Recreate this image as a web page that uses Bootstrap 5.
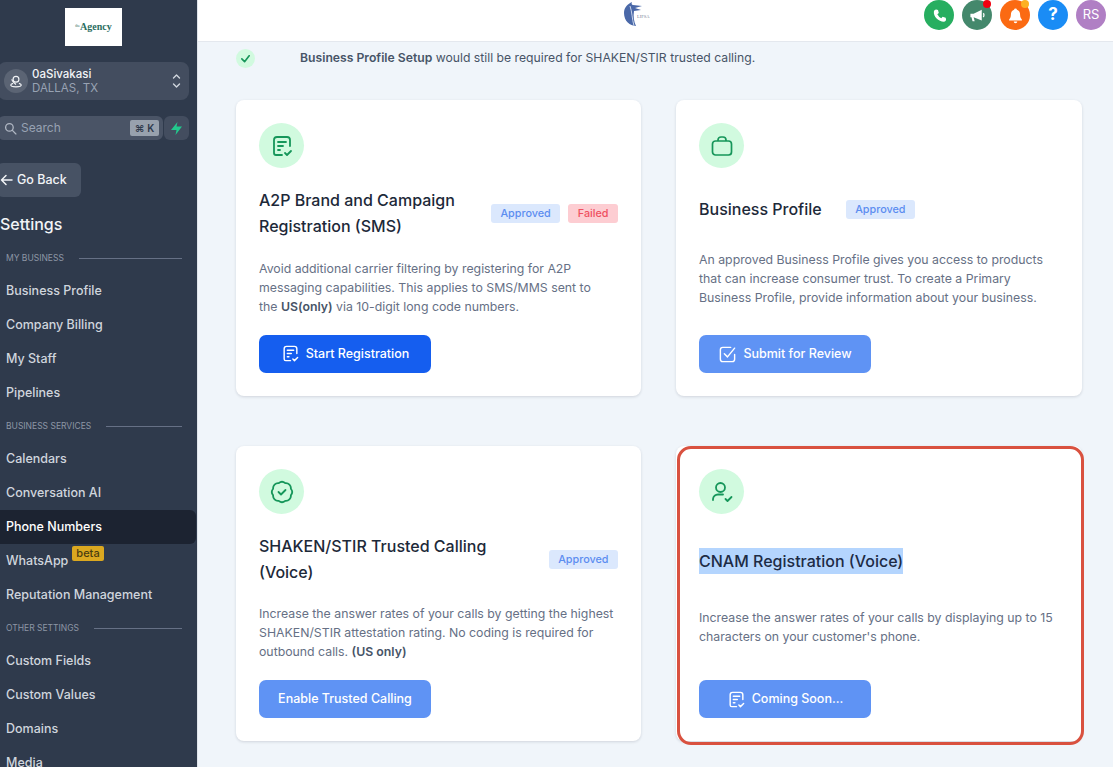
<!DOCTYPE html>
<html lang="en">
<head>
    <meta charset="UTF-8">
    <meta name="viewport" content="width=device-width, initial-scale=1.0">
    <title>Phone Numbers - Settings</title>
    <link href="https://cdn.jsdelivr.net/npm/bootstrap@5.3.0/dist/css/bootstrap.min.css" rel="stylesheet">
    <style>
        html, body { height: 100%; }
        body {
            background: #f0f5fa;
            font-family: Inter, "Noto Sans", sans-serif;
            overflow: hidden;
        }
        .app-shell { height: 767px; }
        .side-bar {
            width: 198px;
            background: #2f3a4c;
            border-right: 1px solid #dfe4ea;
            overflow: hidden;
            color: #d0d5dd;
        }
        .agency-logo {
            width: 57px;
            height: 38px;
            margin: 8px 0 16px 65px;
            font: bold 10px/1 "Liberation Serif", serif;
            color: #2a6e5f;
        }
        .agency-logo sup { font-size: 4px; top: -3px; font-weight: 400; }
        .loc-box {
            width: 191px;
            height: 38px;
            margin-left: -2px;
            padding: 0 8px 0 6px;
            background: #434d5f;
            border-radius: 8px;
        }
        .loc-pin {
            width: 24px;
            height: 24px;
            background: #5b6474;
        }
        .loc-name { font-size: 11.5px; line-height: 14px; color: #f2f4f7; font-weight: 500; }
        .loc-city { font-size: 11.5px; line-height: 14px; color: #98a2b3; }
        .search-row { margin: 16px 0 0 -2px; width: 191px; height: 24px; gap: 1px; }
        .search-box {
            background: #4a5466;
            border-radius: 6px;
            padding: 0 4px 0 6px;
            font-size: 12px;
            color: #98a2b3;
        }
        .kbd-chip {
            width: 29px;
            height: 16px;
            background: #98a1ad;
            color: #2f3a4c;
            border-radius: 2px;
            font-size: 10px;
            font-weight: 600;
        }
        .spark-box { width: 25px; background: #434d5f; border-radius: 6px; }
        .back-btn {
            width: 84px;
            height: 34px;
            margin: 23px 0 0 -3px;
            padding: 0 0 0 3px;
            background: #475264;
            border: 0;
            border-radius: 6px;
            color: #f2f4f7;
            font-size: 12.5px;
            font-weight: 500;
        }
        .side-title {
            margin: 17px 0 8px;
            font-size: 16px;
            line-height: 20px;
            font-weight: 500;
            color: #f2f4f7;
        }
        .side-label {
            height: 32px;
            padding: 0 15px 0 6px;
            gap: 15px;
            font-size: 8.5px;
            color: #8d96a5;
            white-space: nowrap;
        }
        .side-label::after { content: ""; flex: 1; height: 1px; background: #667085; }
        .side-link {
            height: 34px;
            padding-left: 6px;
            font-size: 12.5px;
            font-weight: 500;
            color: #d0d5dd;
            text-decoration: none;
        }
        .side-link.picked {
            background: #1c2331;
            color: #fff;
            margin-right: 1px;
            border-radius: 0 6px 6px 0;
        }
        .beta-tag {
            left: 72px;
            top: 2px;
            width: 32px;
            height: 15px;
            background: #dba820;
            color: #4a3d10;
            border-radius: 2px;
            font-size: 11px;
            line-height: 15px;
            text-align: center;
        }
        .top-bar {
            height: 42px;
            background: #fff;
            border-bottom: 1px solid #e4e8ee;
            padding-right: 7px;
        }
        .brand-mark { margin-left: 424px; width: 32px; height: 28px; align-self: flex-start; }
        .round-btn {
            width: 30px;
            height: 30px;
            color: #fff;
            font-size: 14px;
            font-weight: 500;
        }
        .dot-mark { width: 8px; height: 8px; right: 1px; top: 0; }
        .page-body { padding: 7px 31px 0 38px; }
        .notice-row { height: 19px; font-size: 12.2px; color: #475467; margin-bottom: 32px; }
        .notice-check { width: 19px; height: 19px; background: #d1fadf; margin-right: 45px; }
        .notice-row b { font-weight: 600; }
        .cards-grid {
            display: grid;
            grid-template-columns: 405px 406px;
            grid-template-rows: 296px 295px;
            column-gap: 35px;
            row-gap: 50px;
        }
        .reg-card {
            border: 0;
            border-radius: 8px;
            box-shadow: 0 1px 3px rgba(16, 24, 40, .14);
            padding: 23px 23px 23px;
        }
        .reg-card.flagged::after {
            content: "";
            position: absolute;
            inset: 0 -2px -4px 1px;
            border: 3px solid #d9513f;
            border-radius: 14px;
            pointer-events: none;
        }
        .icon-disc { width: 45px; height: 45px; background: #d1fadf; color: #16965a; }
        .reg-title { font-size: 16px; line-height: 26px; font-weight: 500; color: #1d2939; margin: 0; }
        .reg-title .picked-text { display: inline-block; background: #b4d5fe; color: #1d2b45; }
        .reg-tag {
            height: 19px;
            padding: 0 9.5px;
            font-size: 10.8px;
            line-height: 19px;
            font-weight: 500;
            border-radius: 3px;
        }
        .tag-ok { background: #dbe8fd; color: #5b8df0; }
        .tag-bad { background: #fdcdd2; color: #ef5060; }
        .reg-text { font-size: 12.3px; line-height: 19px; color: #667085; margin: 0; }
        .reg-text b { font-weight: 600; color: #475467; }
        .reg-btn {
            width: 172px;
            height: 38px;
            padding: 0;
            gap: 6px;
            border: 0;
            border-radius: 7px;
            font-size: 12.5px;
            font-weight: 500;
            color: #fff;
            background: #155eef;
        }
        .reg-btn:hover { color: #fff; background: #155eef; }
        .reg-btn.soft, .reg-btn.soft:hover { background: #5f93f4; }
    </style>
</head>
<body>
    <svg class="d-none">
        <symbol id="ico-receipt" viewBox="0 0 24 24" fill="none" stroke="currentColor" stroke-width="1.8" stroke-linecap="round" stroke-linejoin="round">
            <path d="M20 12V6a3 3 0 0 0-3-3H7a3 3 0 0 0-3 3v13a2 2 0 0 0 2 2h6"/>
            <path d="M8 8h8M8 12h5M8 16h2M15 19l2 2 4-4"/>
        </symbol>
        <symbol id="ico-square" viewBox="0 0 24 24" fill="none" stroke="currentColor" stroke-width="1.8" stroke-linecap="round" stroke-linejoin="round">
            <path d="M21 12v6a3 3 0 0 1-3 3H6a3 3 0 0 1-3-3V6a3 3 0 0 1 3-3h10"/>
            <path d="M8 11l4 4 9-11"/>
        </symbol>
    </svg>

    <div class="app-shell d-flex">
        <!-- Sidebar -->
        <aside class="side-bar flex-shrink-0">
            <div class="agency-logo bg-white d-flex align-items-center justify-content-center"><span><sup>the</sup>Agency</span></div>

            <div class="loc-box d-flex align-items-center">
                <span class="loc-pin rounded-circle d-flex align-items-center justify-content-center flex-shrink-0">
                    <svg width="14" height="14" viewBox="0 0 24 24" fill="none" stroke="#f2f4f7" stroke-width="2"><circle cx="12" cy="9" r="5"/><path d="M12 18c-6-5-7-7-7-9M7 16c-3 1-4 2-4 3 0 2 4 3 9 3s9-1 9-3c0-1-1-2-4-3"/></svg>
                </span>
                <div class="flex-grow-1 ms-1">
                    <div class="loc-name">0aSivakasi</div>
                    <div class="loc-city">DALLAS, TX</div>
                </div>
                <svg width="9" height="16" viewBox="0 0 9 16" fill="none" stroke="#d0d5dd" stroke-width="1.4" stroke-linecap="round" stroke-linejoin="round"><path d="M1.5 5L4.5 2l3 3M1.5 11l3 3 3-3"/></svg>
            </div>

            <div class="search-row d-flex">
                <div class="search-box flex-grow-1 d-flex align-items-center gap-1">
                    <svg width="13" height="13" viewBox="0 0 24 24" fill="none" stroke="#b0b7c3" stroke-width="2.4" stroke-linecap="round"><circle cx="10" cy="10" r="7"/><path d="M15.5 15.5L22 22"/></svg>
                    <span class="flex-grow-1">Search</span>
                    <span class="kbd-chip d-flex align-items-center justify-content-center">⌘ K</span>
                </div>
                <div class="spark-box d-flex align-items-center justify-content-center">
                    <svg width="11" height="13" viewBox="0 0 11 13" fill="#22c98d"><path d="M6.5 0L5.5 4.5H11L4.5 13 5.5 8H0z"/></svg>
                </div>
            </div>

            <button class="back-btn btn d-flex align-items-center gap-1">
                <svg width="13" height="12" viewBox="0 0 13 12" fill="none" stroke="#f2f4f7" stroke-width="1.5" stroke-linecap="round" stroke-linejoin="round"><path d="M12 6H1.5M6 1.5L1.5 6 6 10.5"/></svg>
                <span>Go Back</span>
            </button>

            <div class="side-title">Settings</div>

            <div class="side-label d-flex align-items-center">MY BUSINESS</div>
            <a class="side-link d-flex align-items-center" href="#">Business Profile</a>
            <a class="side-link d-flex align-items-center" href="#">Company Billing</a>
            <a class="side-link d-flex align-items-center" href="#">My Staff</a>
            <a class="side-link d-flex align-items-center" href="#">Pipelines</a>

            <div class="side-label d-flex align-items-center">BUSINESS SERVICES</div>
            <a class="side-link d-flex align-items-center" href="#">Calendars</a>
            <a class="side-link d-flex align-items-center" href="#">Conversation AI</a>
            <a class="side-link picked d-flex align-items-center" href="#">Phone Numbers</a>
            <a class="side-link d-flex align-items-center position-relative" href="#">WhatsApp<span class="beta-tag position-absolute">beta</span></a>
            <a class="side-link d-flex align-items-center" href="#">Reputation Management</a>

            <div class="side-label d-flex align-items-center">OTHER SETTINGS</div>
            <a class="side-link d-flex align-items-center" href="#">Custom Fields</a>
            <a class="side-link d-flex align-items-center" href="#">Custom Values</a>
            <a class="side-link d-flex align-items-center" href="#">Domains</a>
            <a class="side-link d-flex align-items-center" href="#">Media</a>
        </aside>

        <div class="flex-grow-1 d-flex flex-column">
            <!-- Top bar -->
            <header class="top-bar d-flex align-items-start flex-shrink-0">
                <svg class="brand-mark" viewBox="0 0 32 28">
                    <path d="M2 13C2 7 6 4 10 2c-1 2 0 3 1 3l9 1-7 2 6 2-7 1c-1 5 0 11 2 15-6 0-12-5-12-13z" fill="#4a68a8"/>
                    <path d="M8 6c2 5 2 13 4 20" stroke="#c9d5ea" stroke-width="1" fill="none"/>
                    <text x="15" y="18" font-size="4.5" fill="#7a8398" font-family="Liberation Serif, serif">LIFSA</text>
                </svg>
                <div class="ms-auto d-flex gap-2">
                    <span class="round-btn rounded-circle d-flex align-items-center justify-content-center" style="background:#27ae60">
                        <svg width="15" height="15" viewBox="0 0 24 24" fill="#fff"><path d="M6.6 2.5l3 .6 1.3 5-2.4 2a14 14 0 0 0 6.4 6.4l2-2.4 5 1.3.6 3c.1 1.500-1.500 3.600-3.500 3.600C10.500 22 2 13.500 3 6c0-2 2.100-3.600 3.600-3.500z"/></svg>
                    </span>
                    <span class="round-btn rounded-circle position-relative d-flex align-items-center justify-content-center" style="background:#44886c">
                        <svg width="17" height="17" viewBox="0 0 24 24" fill="#fff"><path d="M2 9.500h4.500L18 4v15l-11.500-4.500L8 20H5l-1.500-5.500H2z"/><path d="M20 9c1.500.8 1.500 4 0 5" stroke="#fff" stroke-width="1.800" fill="none"/></svg>
                        <span class="dot-mark position-absolute rounded-circle" style="background:#f0000f"></span>
                    </span>
                    <span class="round-btn rounded-circle position-relative d-flex align-items-center justify-content-center" style="background:#fb6a12">
                        <svg width="17" height="17" viewBox="0 0 24 24" fill="#fff"><path d="M12 2a2 2 0 0 1 2 2c3 1 4.500 3.500 4.500 7 0 3 1 5 2.500 6.500V19H3v-1.500C4.500 16 5.500 14 5.500 11c0-3.500 1.500-6 4.500-7a2 2 0 0 1 2-2zM9.500 20.500h5a2.500 2.500 0 0 1-5 0z"/></svg>
                        <span class="dot-mark position-absolute rounded-circle" style="background:#fdb022"></span>
                    </span>
                    <span class="round-btn rounded-circle d-flex align-items-center justify-content-center fw-bold" style="background:#1a8cf5;font-size:17px">?</span>
                    <span class="round-btn rounded-circle d-flex align-items-center justify-content-center" style="background:#b07fc4;font-weight:400;font-size:13px">RS</span>
                </div>
            </header>

            <main class="page-body flex-grow-1">
                <div class="notice-row d-flex align-items-center">
                    <span class="notice-check rounded-circle d-flex align-items-center justify-content-center">
                        <svg width="11" height="11" viewBox="0 0 12 12" fill="none" stroke="#16965a" stroke-width="1.800" stroke-linecap="round" stroke-linejoin="round"><path d="M2 6.500L5 9.500 10 3"/></svg>
                    </span>
                    <span><b>Business Profile Setup</b> would still be required for SHAKEN/STIR trusted calling.</span>
                </div>

                <div class="cards-grid">
                    <!-- A2P -->
                    <section class="reg-card card d-flex flex-column justify-content-between">
                        <span class="icon-disc rounded-circle d-flex align-items-center justify-content-center">
                            <svg width="24" height="24"><use href="#ico-receipt"/></svg>
                        </span>
                        <div class="d-flex align-items-center justify-content-between">
                            <h2 class="reg-title">A2P Brand and Campaign<br>Registration (SMS)</h2>
                            <div class="d-flex gap-2">
                                <span class="reg-tag tag-ok badge">Approved</span>
                                <span class="reg-tag tag-bad badge">Failed</span>
                            </div>
                        </div>
                        <p class="reg-text">Avoid additional carrier filtering by registering for A2P<br>messaging capabilities. This applies to SMS/MMS sent to<br>the <b>US(only)</b> via 10-digit long code numbers.</p>
                        <button class="reg-btn btn d-flex align-items-center justify-content-center">
                            <svg width="19" height="19"><use href="#ico-receipt"/></svg>Start Registration
                        </button>
                    </section>

                    <!-- Business profile -->
                    <section class="reg-card card d-flex flex-column justify-content-between">
                        <span class="icon-disc rounded-circle d-flex align-items-center justify-content-center">
                            <svg width="24" height="24" viewBox="0 0 24 24" fill="none" stroke="currentColor" stroke-width="1.700"><rect x="2.500" y="7" width="19" height="14" rx="3"/><path d="M8 7V6a3 3 0 0 1 3-3h2a3 3 0 0 1 3 3v1"/></svg>
                        </span>
                        <div class="d-flex align-items-center gap-4">
                            <h2 class="reg-title">Business Profile</h2>
                            <span class="reg-tag tag-ok badge">Approved</span>
                        </div>
                        <p class="reg-text">An approved Business Profile gives you access to products<br>that can increase consumer trust. To create a Primary<br>Business Profile, provide information about your business.</p>
                        <button class="reg-btn soft btn d-flex align-items-center justify-content-center">
                            <svg width="19" height="19"><use href="#ico-square"/></svg>Submit for Review
                        </button>
                    </section>

                    <!-- SHAKEN/STIR -->
                    <section class="reg-card card d-flex flex-column justify-content-between">
                        <span class="icon-disc rounded-circle d-flex align-items-center justify-content-center">
                            <svg width="24" height="24" viewBox="0 0 24 24" fill="none" stroke="currentColor" stroke-width="1.800" stroke-linecap="round" stroke-linejoin="round">
                                <path d="M8.750 3.150A5 5 0 0 1 15.250 3.150 5 5 0 0 1 20.850 8.750 5 5 0 0 1 20.850 15.250 5 5 0 0 1 15.250 20.850 5 5 0 0 1 8.750 20.850 5 5 0 0 1 3.150 15.250 5 5 0 0 1 3.150 8.750 5 5 0 0 1 8.750 3.150z"/>
                                <path d="M8.500 12l2.500 2.500 4.500-4.500"/>
                            </svg>
                        </span>
                        <div class="d-flex align-items-center justify-content-between">
                            <h2 class="reg-title">SHAKEN/STIR Trusted Calling<br>(Voice)</h2>
                            <span class="reg-tag tag-ok badge">Approved</span>
                        </div>
                        <p class="reg-text">Increase the answer rates of your calls by getting the highest<br>SHAKEN/STIR attestation rating. No coding is required for<br>outbound calls. <b>(US only)</b></p>
                        <button class="reg-btn soft btn">Enable Trusted Calling</button>
                    </section>

                    <!-- CNAM -->
                    <section class="reg-card flagged card d-flex flex-column justify-content-between position-relative">
                        <span class="icon-disc rounded-circle d-flex align-items-center justify-content-center">
                            <svg width="24" height="24" viewBox="0 0 24 24" fill="none" stroke="currentColor" stroke-width="1.800" stroke-linecap="round" stroke-linejoin="round">
                                <circle cx="10.500" cy="7.500" r="4.500"/>
                                <path d="M3 20v-1a5 5 0 0 1 5-4.500h5M15.500 19l2 2 4-4"/>
                            </svg>
                        </span>
                        <h2 class="reg-title"><span class="picked-text">CNAM Registration (Voice)</span></h2>
                        <p class="reg-text">Increase the answer rates of your calls by displaying up to 15<br>characters on your customer's phone.</p>
                        <button class="reg-btn soft btn d-flex align-items-center justify-content-center">
                            <svg width="19" height="19"><use href="#ico-receipt"/></svg>Coming Soon...
                        </button>
                    </section>
                </div>
            </main>
        </div>
    </div>

    <script src="https://cdn.jsdelivr.net/npm/bootstrap@5.3.0/dist/js/bootstrap.bundle.min.js"></script>
</body>
</html>
